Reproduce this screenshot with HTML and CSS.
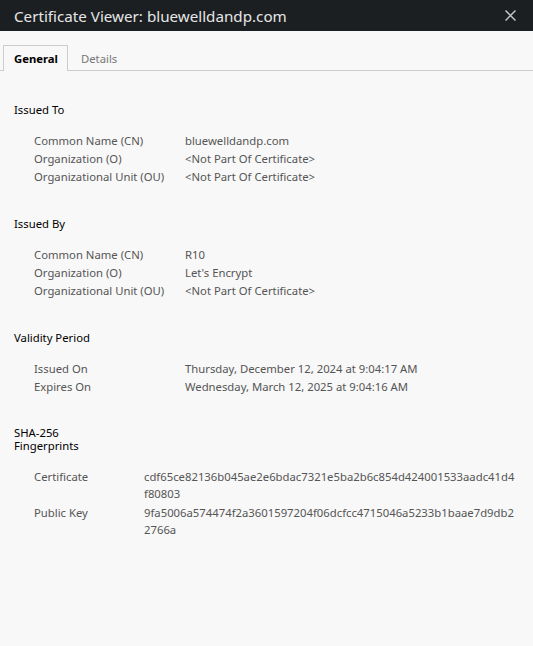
FILE: index.html
```html
<!DOCTYPE html>
<html>
<head>
<meta charset="utf-8">
<title>Certificate Viewer</title>
<link rel="stylesheet" href="styles.css">
</head>
<body>
<div class="titlebar">
  <div class="title">Certificate Viewer: bluewelldandp.com</div>
  <svg class="close" width="11" height="11" viewBox="0 0 11 11"><path d="M0.5 0.5 L10.5 10.5 M10.5 0.5 L0.5 10.5" stroke="#c4c4c4" stroke-width="1.5"/></svg>
</div>
<div class="tabs">
  <div class="tab active">General</div>
  <div class="tab">Details</div>
</div>
<div class="content">
  <section class="sec">
    <h2 class="heading">Issued To</h2>
    <div class="rows">
      <div class="label">Common Name (CN)</div><div class="value">bluewelldandp.com</div>
      <div class="label">Organization (O)</div><div class="value">&lt;Not Part Of Certificate&gt;</div>
      <div class="label">Organizational Unit (OU)</div><div class="value">&lt;Not Part Of Certificate&gt;</div>
    </div>
  </section>
  <section class="sec">
    <h2 class="heading">Issued By</h2>
    <div class="rows">
      <div class="label">Common Name (CN)</div><div class="value">R10</div>
      <div class="label">Organization (O)</div><div class="value">Let's Encrypt</div>
      <div class="label">Organizational Unit (OU)</div><div class="value">&lt;Not Part Of Certificate&gt;</div>
    </div>
  </section>
  <section class="sec validity">
    <h2 class="heading">Validity Period</h2>
    <div class="rows">
      <div class="label">Issued On</div><div class="value">Thursday, December 12, 2024 at 9:04:17 AM</div>
      <div class="label">Expires On</div><div class="value">Wednesday, March 12, 2025 at 9:04:16 AM</div>
    </div>
  </section>
  <section class="sec">
    <h2 class="heading narrow">SHA-256 Fingerprints</h2>
    <div class="rows fp">
      <div class="label">Certificate</div><div class="value hex"><span>cdf65ce82136b045ae2e6bdac7321e5ba2b6c854d424001533aadc41d4</span><span>f80803</span></div>
      <div class="label">Public Key</div><div class="value hex"><span>9fa5006a574474f2a3601597204f06dcfcc4715046a5233b1baae7d9db2</span><span>2766a</span></div>
    </div>
  </section>
</div>
</body>
</html>
```
FILE: styles.css
```css
html, body {
  margin: 0;
  padding: 0;
  background: #f8f8f8;
  height: 100%;
}
body {
  font-family: "Noto Sans", "Open Sans", sans-serif;
  font-size: 11.3px;
  color: #000;
}
.titlebar {
  height: 31px;
  background: #1c1f22;
  display: flex;
  align-items: center;
  justify-content: space-between;
  padding: 0 17px 0 14px;
}
.title {
  color: #e6e6e6;
  font-size: 15.2px;
  line-height: 20px;
}
.close { display: block; }
.tabs {
  display: flex;
  padding: 14px 0 0 3px;
  border-bottom: 1px solid #cccccc;
  height: 25px;
}
.tab {
  padding: 0 11px 0 12px;
  line-height: 25px;
  color: #777;
  border: 1px solid transparent;
  border-bottom: none;
}
.tab.active {
  color: #000;
  font-weight: bold;
  padding: 0 9px 0 10px;
  border-color: #cccccc;
  background: #f8f8f8;
  height: 25px;
  margin-bottom: -1px;
}
.content {
  padding: 30px 14px 0 14px;
}
.sec {
  margin-bottom: 29px;
}
.sec.validity {
  margin-bottom: 30px;
}
.heading {
  font-size: 11.3px;
  font-weight: normal;
  line-height: 18px;
  margin: 0 0 13px 0;
}
.heading.narrow {
  width: 80px;
  line-height: 13px;
  margin-bottom: 16px;
}
.rows {
  display: grid;
  grid-template-columns: 151px auto;
  padding-left: 20px;
  line-height: 18px;
  color: #555;
  justify-content: start;
}
.rows.fp {
  grid-template-columns: 110px auto;
  line-height: 17px;
  row-gap: 2px;
}
.hex {
  display: flex;
  flex-direction: column;
  white-space: nowrap;
}
```
